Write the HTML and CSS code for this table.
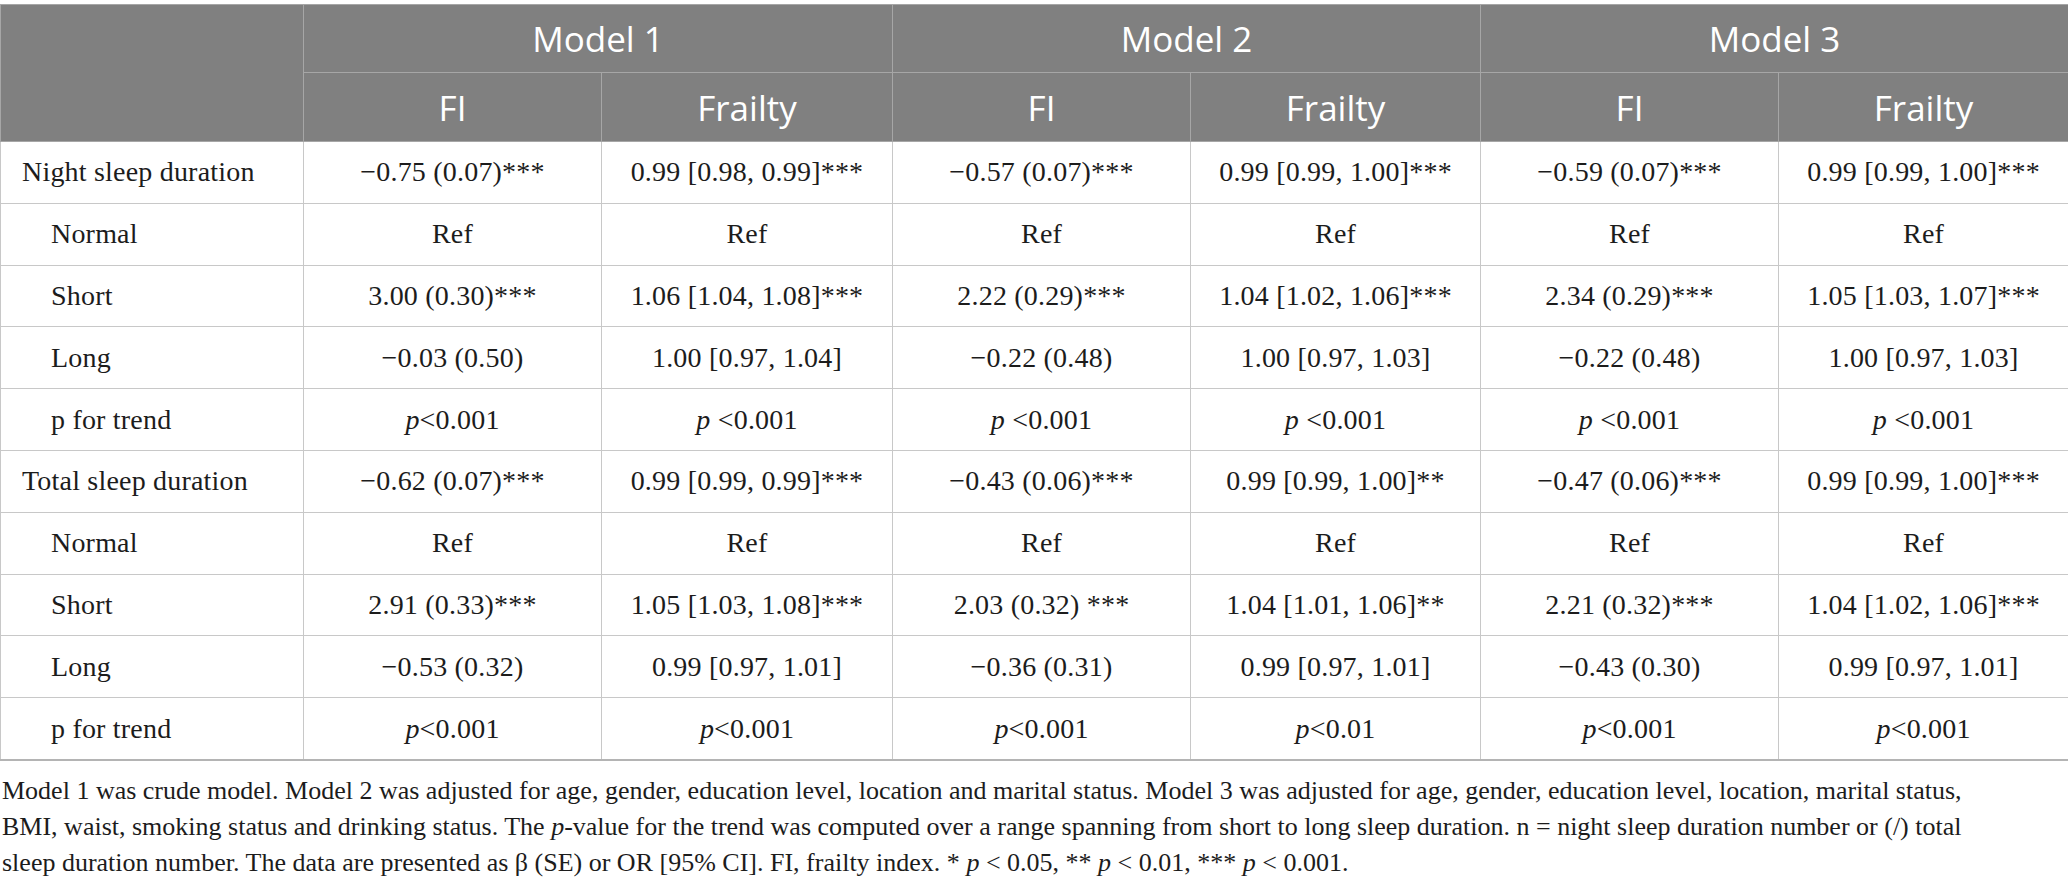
FILE: index.html
```html
<!DOCTYPE html>
<html lang="en">
<head>
<meta charset="utf-8">
<title>Sleep duration and frailty</title>
<link rel="stylesheet" href="styles.css">
</head>
<body>
<div class="page">
  <table class="results">
    <colgroup>
      <col class="c-label">
      <col class="c-fi1"><col class="c-fr1">
      <col class="c-fi2"><col class="c-fr2">
      <col class="c-fi3"><col class="c-fr3">
    </colgroup>
    <thead>
      <tr class="h1">
        <th rowspan="2" class="corner"></th>
        <th colspan="2">Model 1</th>
        <th colspan="2">Model 2</th>
        <th colspan="2">Model 3</th>
      </tr>
      <tr class="h2">
        <th>FI</th><th>Frailty</th>
        <th>FI</th><th>Frailty</th>
        <th>FI</th><th>Frailty</th>
      </tr>
    </thead>
    <tbody>
      <tr>
        <td class="lbl">Night sleep duration</td>
        <td>−0.75 (0.07)***</td><td>0.99 [0.98, 0.99]***</td>
        <td>−0.57 (0.07)***</td><td>0.99 [0.99, 1.00]***</td>
        <td>−0.59 (0.07)***</td><td>0.99 [0.99, 1.00]***</td>
      </tr>
      <tr>
        <td class="lbl sub">Normal</td>
        <td>Ref</td><td>Ref</td><td>Ref</td><td>Ref</td><td>Ref</td><td>Ref</td>
      </tr>
      <tr>
        <td class="lbl sub">Short</td>
        <td>3.00 (0.30)***</td><td>1.06 [1.04, 1.08]***</td>
        <td>2.22 (0.29)***</td><td>1.04 [1.02, 1.06]***</td>
        <td>2.34 (0.29)***</td><td>1.05 [1.03, 1.07]***</td>
      </tr>
      <tr>
        <td class="lbl sub">Long</td>
        <td>−0.03 (0.50)</td><td>1.00 [0.97, 1.04]</td>
        <td>−0.22 (0.48)</td><td>1.00 [0.97, 1.03]</td>
        <td>−0.22 (0.48)</td><td>1.00 [0.97, 1.03]</td>
      </tr>
      <tr>
        <td class="lbl sub">p for trend</td>
        <td><i>p</i>&lt;0.001</td><td><i>p</i> &lt;0.001</td>
        <td><i>p</i> &lt;0.001</td><td><i>p</i> &lt;0.001</td>
        <td><i>p</i> &lt;0.001</td><td><i>p</i> &lt;0.001</td>
      </tr>
      <tr>
        <td class="lbl">Total sleep duration</td>
        <td>−0.62 (0.07)***</td><td>0.99 [0.99, 0.99]***</td>
        <td>−0.43 (0.06)***</td><td>0.99 [0.99, 1.00]**</td>
        <td>−0.47 (0.06)***</td><td>0.99 [0.99, 1.00]***</td>
      </tr>
      <tr>
        <td class="lbl sub">Normal</td>
        <td>Ref</td><td>Ref</td><td>Ref</td><td>Ref</td><td>Ref</td><td>Ref</td>
      </tr>
      <tr>
        <td class="lbl sub">Short</td>
        <td>2.91 (0.33)***</td><td>1.05 [1.03, 1.08]***</td>
        <td>2.03 (0.32) ***</td><td>1.04 [1.01, 1.06]**</td>
        <td>2.21 (0.32)***</td><td>1.04 [1.02, 1.06]***</td>
      </tr>
      <tr>
        <td class="lbl sub">Long</td>
        <td>−0.53 (0.32)</td><td>0.99 [0.97, 1.01]</td>
        <td>−0.36 (0.31)</td><td>0.99 [0.97, 1.01]</td>
        <td>−0.43 (0.30)</td><td>0.99 [0.97, 1.01]</td>
      </tr>
      <tr class="last">
        <td class="lbl sub">p for trend</td>
        <td><i>p</i>&lt;0.001</td><td><i>p</i>&lt;0.001</td>
        <td><i>p</i>&lt;0.001</td><td><i>p</i>&lt;0.01</td>
        <td><i>p</i>&lt;0.001</td><td><i>p</i>&lt;0.001</td>
      </tr>
    </tbody>
  </table>
  <p class="note">Model 1 was crude model. Model 2 was adjusted for age, gender, education level, location and marital status. Model 3 was adjusted for age, gender, education level, location, marital status,<br>BMI, waist, smoking status and drinking status. The <i>p</i>-value for the trend was computed over a range spanning from short to long sleep duration. n = night sleep duration number or (/) total<br>sleep duration number. The data are presented as β (SE) or OR [95% CI]. FI, frailty index. * <i>p</i> &lt; 0.05, ** <i>p</i> &lt; 0.01, *** <i>p</i> &lt; 0.001.</p>
</div>
</body>
</html>
```

FILE: styles.css
```css
html, body {
  margin: 0;
  padding: 0;
  background: #ffffff;
}

.page {
  width: 2068px;
  padding-top: 4px;
  font-family: "Liberation Serif", "Times New Roman", serif;
  color: #1c1c1c;
}

.results {
  width: 2068px;
  border-collapse: collapse;
  table-layout: fixed;
  border-top: 1px solid #c4c4c4;
  border-left: 1px solid #c4c4c4;
  border-right: 1px solid #c4c4c4;
  border-bottom: 2px solid #b4b4b4;
}

.c-label { width: 303px; }
.c-fi1 { width: 298px; }
.c-fr1 { width: 291px; }
.c-fi2 { width: 298px; }
.c-fr2 { width: 290px; }
.c-fi3 { width: 298px; }
.c-fr3 { width: 290px; }

.results th {
  background: #808080;
  color: #ffffff;
  font-family: "Open Sans", "Noto Sans", sans-serif;
  font-weight: 400;
  font-size: 35px;
  text-align: center;
  border: 1px solid #a6a6a6;
  padding: 0;
}

.results .h1 th { height: 67px; }
.results .h2 th { height: 68px; }

.results td {
  height: 60.8px;
  padding: 0 4px;
  border: 1px solid #c8c8c8;
  text-align: center;
  font-size: 28px;
  letter-spacing: 0.2px;
  white-space: nowrap;
}

.results td.lbl {
  text-align: left;
  padding-left: 21px;
}

.results td.sub {
  padding-left: 50px;
}

.note {
  margin: 12px 0 0 0;
  padding-left: 2px;
  font-size: 26px;
  line-height: 36px;
  color: #1c1c1c;
  white-space: nowrap;
}
```
